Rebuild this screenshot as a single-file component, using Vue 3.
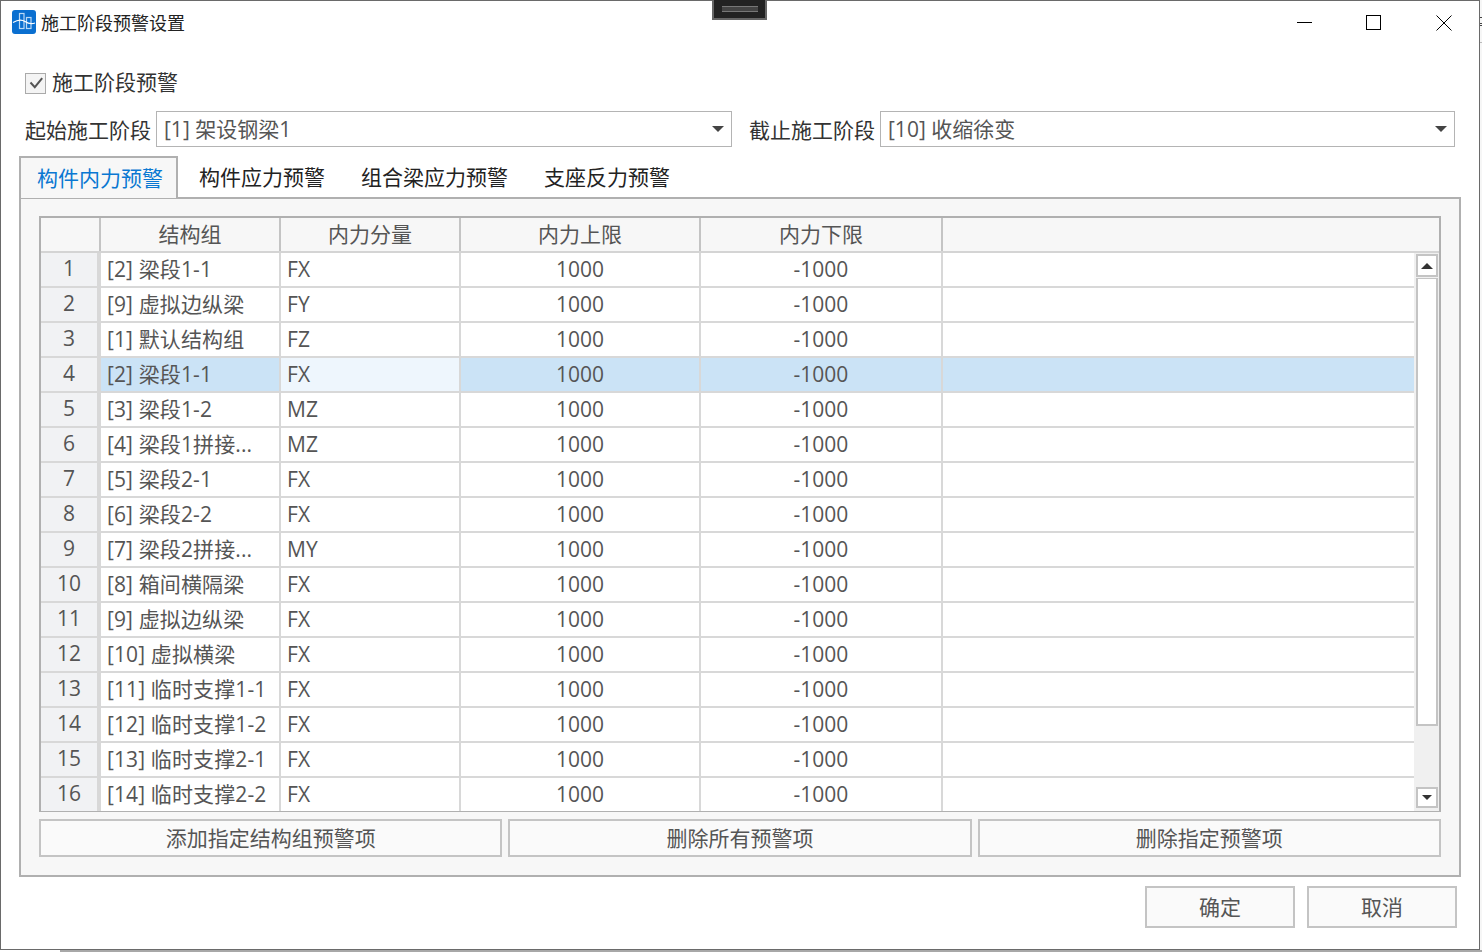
<script setup>
import { ref } from "vue"

const tabs = ["构件内力预警", "构件应力预警", "组合梁应力预警", "支座反力预警"]
const columns = ["结构组", "内力分量", "内力上限", "内力下限"]

const rows = ref([
	["[2] 梁段1-1", "FX"],
	["[9] 虚拟边纵梁", "FY"],
	["[1] 默认结构组", "FZ"],
	["[2] 梁段1-1", "FX"],
	["[3] 梁段1-2", "MZ"],
	["[4] 梁段1拼接...", "MZ"],
	["[5] 梁段2-1", "FX"],
	["[6] 梁段2-2", "FX"],
	["[7] 梁段2拼接...", "MY"],
	["[8] 箱间横隔梁", "FX"],
	["[9] 虚拟边纵梁", "FX"],
	["[10] 虚拟横梁", "FX"],
	["[11] 临时支撑1-1", "FX"],
	["[12] 临时支撑1-2", "FX"],
	["[13] 临时支撑2-1", "FX"],
	["[14] 临时支撑2-2", "FX"]
])
const selectedRow = 3
</script>

<template>
	<div class="screen">
		<div class="window">
			<div class="titlebar">
				<svg class="appicon" width="24" height="24" viewBox="0 0 24 24">
					<rect width="24" height="24" rx="3" fill="#0a6fd0" />
					<rect x="7.5" y="3.5" width="4.5" height="15" fill="none" stroke="#b9d8f5" stroke-width="1.2" />
					<rect x="14.5" y="7.5" width="4.5" height="11" fill="none" stroke="#b9d8f5" stroke-width="1.2" />
					<path d="M1 12.5 C6 9.5 10 9.5 13 11.5 S19 14.5 23 13" fill="none" stroke="#fff" stroke-width="1.1" />
				</svg>
				<span class="title">施工阶段预警设置</span>
				<div class="winbtns">
					<svg width="16" height="16" viewBox="0 0 16 16"><path d="M1 7.5H16" stroke="#000" /></svg>
					<svg width="16" height="16" viewBox="0 0 16 16"><rect x="0.5" y="0.5" width="14" height="14" fill="none" stroke="#000" /></svg>
					<svg width="16" height="16" viewBox="0 0 16 16"><path d="M0.5 0.5L15.5 15.5M15.5 0.5L0.5 15.5" stroke="#000" /></svg>
				</div>
			</div>

			<label class="check">
				<span class="checkbox">
					<svg width="16" height="14" viewBox="0 0 16 14"><path d="M2.5 6.5L6.8 11.2L14.2 2.2" fill="none" stroke="#555" stroke-width="2" /></svg>
				</span>
				施工阶段预警
			</label>

			<div class="stages">
				<span class="stageLabel">起始施工阶段</span>
				<div class="combo first">
					<span>[1] 架设钢梁1</span>
					<i class="arrow"></i>
				</div>
				<span class="stageLabel second">截止施工阶段</span>
				<div class="combo">
					<span>[10] 收缩徐变</span>
					<i class="arrow"></i>
				</div>
			</div>

			<div class="tabs">
				<div
					v-for="(tab, index) in tabs"
					:key="tab"
					class="tab"
					:class="{ active: index === 0 }"
				>{{ tab }}</div>
			</div>

			<div class="panel">
				<div class="grid">
					<div class="headrow">
						<div class="corner"></div>
						<div
							v-for="(col, index) in columns"
							:key="col"
							class="headcell"
							:class="'c' + index"
						>{{ col }}</div>
					</div>
					<div class="gridbody">
						<div class="rows">
							<div
								v-for="(row, index) in rows"
								:key="index"
								class="row"
								:class="{ selected: index === selectedRow }"
							>
								<div class="rownum">{{ index + 1 }}</div>
								<div class="cell c0 text">{{ row[0] }}</div>
								<div class="cell c1 text current">{{ row[1] }}</div>
								<div class="cell c2">1000</div>
								<div class="cell c3">-1000</div>
								<div class="cell rest"></div>
							</div>
						</div>
						<div class="scrollbar">
							<div class="sbtn"><i class="up"></i></div>
							<div class="thumb"></div>
							<div class="sbtn bottom"><i class="down"></i></div>
						</div>
					</div>
				</div>
				<div class="actions">
					<button class="btn">添加指定结构组预警项</button>
					<button class="btn">删除所有预警项</button>
					<button class="btn">删除指定预警项</button>
				</div>
			</div>

			<div class="footer">
				<button class="btn foot">确定</button>
				<button class="btn foot">取消</button>
			</div>
		</div>
		<div class="grip"><span></span></div>
		<div class="behind"></div>
		<div class="strip">
			<i class="mark m1"></i>
			<i class="mark m2"></i>
			<i class="mark m3"></i>
			<i class="stripline"></i>
		</div>
	</div>
</template>

<style>
html, body {
	margin: 0;
	background: #fff;
	overflow: hidden;
}
</style>

<style scoped>
.screen {
	position: relative;
	width: 1482px;
	height: 952px;
	overflow: hidden;
	background: #fff;
	font-family: "Open Sans", "Noto Sans CJK SC", sans-serif;
	color: #444;
}

.window {
	box-sizing: border-box;
	width: 1480px;
	height: 950px;
	border: 1px solid #6a6a6a;
	background: #fff;
	display: flex;
	flex-direction: column;
	padding: 0 18px;
}

.behind {
	position: absolute;
	left: 60px;
	right: 0;
	bottom: 0;
	height: 2px;
	background: #a8a8a8;
}

.strip {
	position: absolute;
	left: 1480px;
	top: 0;
	width: 2px;
	height: 950px;
	background: #f6f6f6;
}

.mark {
	position: absolute;
	left: 0;
	width: 2px;
	height: 1px;
	background: #444;
}

.m1 { top: 17px; }
.m2 { top: 23px; }
.m3 { top: 25px; }

.stripline {
	position: absolute;
	left: 0;
	top: 42px;
	width: 2px;
	height: 1px;
	background: #bbb;
}

.grip {
	position: absolute;
	left: 712px;
	top: 0;
	width: 55px;
	height: 20px;
	box-sizing: border-box;
	background: #222;
	border: 2px solid #666;
	border-top: 0;
	display: flex;
	align-items: center;
	justify-content: center;
}

.grip span {
	width: 36px;
	height: 4px;
	border-top: 1px solid #777;
	border-bottom: 1px solid #777;
	background: #444;
}

.titlebar {
	height: 42px;
	margin: 0 -7px;
	display: flex;
	align-items: center;
	gap: 5px;
	flex: none;
}

.title {
	font-size: 18px;
	color: #222;
}

.winbtns {
	margin-left: auto;
	display: flex;
	gap: 54px;
	margin-top: 2px;
	margin-right: 16px;
}

.check {
	display: flex;
	align-items: center;
	gap: 6px;
	height: 32px;
	margin: 22px 0 0 6px;
	font-size: 21px;
	color: #333;
	flex: none;
}

.checkbox {
	box-sizing: border-box;
	width: 21px;
	height: 21px;
	margin-top: 4px;
	border: 1px solid #aaa;
	background: #f4f4f4;
	display: flex;
	align-items: center;
	justify-content: center;
}

.stages {
	display: flex;
	align-items: center;
	height: 36px;
	margin: 14px 6px 0 6px;
	font-size: 21px;
	color: #333;
	flex: none;
}

.stageLabel {
	width: 131px;
	flex: none;
}

.stageLabel.second {
	margin-left: 17px;
}

.combo {
	flex: 1;
	box-sizing: border-box;
	height: 36px;
	border: 1px solid #b4b4b4;
	display: flex;
	align-items: center;
	justify-content: space-between;
	padding: 0 7px;
	color: #555;
}

.combo.first {
	flex: none;
	width: 576px;
}

.combo span {
	margin-bottom: 2px;
}

.arrow {
	width: 0;
	height: 0;
	border-left: 6px solid transparent;
	border-right: 6px solid transparent;
	border-top: 6px solid #444;
}

.tabs {
	display: flex;
	margin-top: 9px;
	height: 41px;
	position: relative;
	z-index: 1;
	flex: none;
}

.tab {
	padding: 0 18px;
	line-height: 42px;
	font-size: 21px;
	color: #222;
}

.tab.active {
	box-sizing: border-box;
	height: 42px;
	padding: 0 13px 0 16px;
	margin-right: 3px;
	background: #f7f7f7;
	border: 2px solid #b0b0b0;
	border-bottom: 0;
	color: #0a78d2;
	line-height: 40px;
}

.panel {
	box-sizing: border-box;
	width: 1442px;
	height: 680px;
	flex: none;
	border: 2px solid #b0b0b0;
	background: #f7f7f7;
	padding: 17px 18px 0;
}

.grid {
	box-sizing: border-box;
	height: 596px;
	border: 2px solid #b0b0b0;
	border-bottom-width: 1px;
	background: #f7f7f7;
	overflow: hidden;
}

.headrow {
	display: flex;
	box-sizing: border-box;
	height: 35px;
	font-size: 21px;
	line-height: 33px;
	border-bottom: 2px solid #d4d4d4;
	color: #555;
}

.corner {
	width: 58px;
	flex: none;
	border-right: 2px solid #c4c4c4;
}

.headcell {
	box-sizing: border-box;
	flex: none;
	text-align: center;
	border-right: 2px solid #c4c4c4;
}

.c0 { width: 180px; }
.c1 { width: 180px; }
.c2 { width: 240px; }
.c3 { width: 242px; }

.gridbody {
	display: flex;
	height: 558px;
}

.rows {
	flex: 1;
	overflow: hidden;
	background: #fff;
}

.row {
	display: flex;
	height: 35px;
	font-size: 21px;
	line-height: 33px;
	color: #555;
}

.rownum {
	box-sizing: border-box;
	width: 60px;
	flex: none;
	background: #f1f2f4;
	text-align: center;
	line-height: 30px;
	border-right: 4px solid #d8d8d8;
	border-bottom: 2px solid #d8d8d8;
}

.cell {
	box-sizing: border-box;
	flex: none;
	text-align: center;
	border-right: 2px solid #d8d8d8;
	border-bottom: 2px solid #d8d8d8;
	white-space: nowrap;
}

.cell.text {
	text-align: left;
	padding-left: 6px;
	letter-spacing: 0.12px;
}

.cell.rest {
	flex: 1;
	border-right: 0;
}

.row.selected .cell {
	background: #cbe3f6;
}

.row.selected .cell.current {
	background: #eef6fd;
}

.scrollbar {
	box-sizing: border-box;
	width: 25px;
	flex: none;
	background: #f0f0f0;
	padding: 1px 1px 0 2px;
	display: flex;
	flex-direction: column;
}

.sbtn {
	box-sizing: border-box;
	height: 23px;
	flex: none;
	background: #fff;
	border: 2px solid #c4c4c4;
	display: flex;
	align-items: center;
	justify-content: center;
}

.sbtn.bottom {
	height: 21px;
	margin-top: auto;
	margin-bottom: 3px;
}

.thumb {
	box-sizing: border-box;
	height: 448px;
	margin-top: 1px;
	background: #fff;
	border: 2px solid #c4c4c4;
	border-top-width: 1px;
}

.up {
	border-left: 6px solid transparent;
	border-right: 6px solid transparent;
	border-bottom: 6px solid #333;
}

.down {
	border-left: 5px solid transparent;
	border-right: 5px solid transparent;
	border-top: 5px solid #333;
}

.actions {
	display: flex;
	gap: 6px;
	margin-top: 7px;
}

.btn {
	flex: 1;
	box-sizing: border-box;
	height: 38px;
	border: 2px solid #c4c4c4;
	background: #fafafa;
	font: inherit;
	font-size: 21px;
	color: #555;
	padding: 0 0 2px;
}

.footer {
	display: flex;
	justify-content: flex-end;
	gap: 12px;
	margin: 9px 4px 0 0;
}

.btn.foot {
	flex: none;
	width: 150px;
	height: 42px;
}
</style>
